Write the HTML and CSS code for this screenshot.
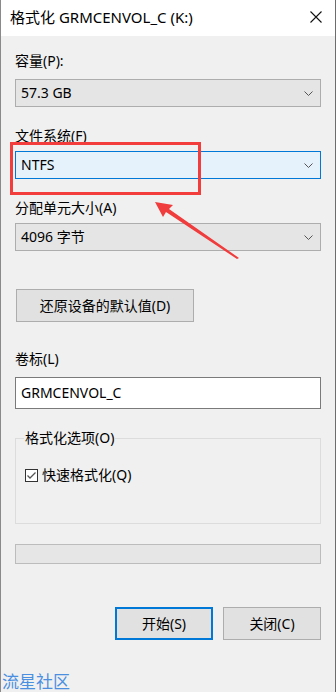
FILE: index.html
```html
<!DOCTYPE html>
<html lang="zh-CN">
<head>
<meta charset="utf-8">
<title>格式化</title>
<link rel="stylesheet" href="styles.css">
</head>
<body>
<div class="window">
  <header class="titlebar">
    <span class="title">格式化 GRMCENVOL_C (K:)</span>
    <svg class="close" width="12" height="12" viewBox="0 0 12 12"><path d="M0.5 0.5L11.5 11.5M11.5 0.5L0.5 11.5" stroke="#111" stroke-width="1.1" fill="none"/></svg>
  </header>
  <main class="content">
    <div class="label l1">容量(P):</div>
    <div class="combo">
      <span>57.3 GB</span>
      <svg class="chev" width="9" height="5" viewBox="0 0 9 5"><path d="M0.5 0.5L4.5 4.5L8.5 0.5" stroke="#555" stroke-width="1" fill="none"/></svg>
    </div>

    <div class="label l2">文件系统(F)</div>
    <div class="combo focused">
      <span>NTFS</span>
      <svg class="chev" width="9" height="5" viewBox="0 0 9 5"><path d="M0.5 0.5L4.5 4.5L8.5 0.5" stroke="#555" stroke-width="1" fill="none"/></svg>
    </div>

    <div class="label l3">分配单元大小(A)</div>
    <div class="combo">
      <span>4096 字节</span>
      <svg class="chev" width="9" height="5" viewBox="0 0 9 5"><path d="M0.5 0.5L4.5 4.5L8.5 0.5" stroke="#555" stroke-width="1" fill="none"/></svg>
    </div>

    <div class="btn restore">还原设备的默认值(D)</div>

    <div class="label l4">卷标(L)</div>
    <div class="textbox">GRMCENVOL_C</div>

    <fieldset class="group">
      <legend>格式化选项(O)</legend>
      <div class="check">
        <svg class="box" width="13" height="13" viewBox="0 0 13 13"><rect x="0.5" y="0.5" width="12" height="12" fill="#fff" stroke="#333"/><path d="M2.5 6.5L5 9L10.5 3.5" stroke="#555" stroke-width="1.3" fill="none"/></svg>
        <span>快速格式化(Q)</span>
      </div>
    </fieldset>

    <div class="progress"></div>

    <div class="actions">
      <div class="btn primary">开始(S)</div>
      <div class="btn">关闭(C)</div>
    </div>
  </main>
  <div class="watermark">流星社区</div>

  <div class="highlight"></div>
  <svg class="arrow" width="336" height="692" viewBox="0 0 336 692">
    <polygon points="155,202 173,205 169,209 239,258 237,259 166,212 163,217" fill="#f03c3c"/>
  </svg>
</div>
</body>
</html>
```
FILE: styles.css
```css
* { box-sizing: border-box; }
html, body { margin: 0; padding: 0; }
body {
  width: 336px;
  height: 692px;
  overflow: hidden;
  background: #f0f0f0;
  font-family: "Noto Sans", "Noto Sans CJK SC", sans-serif;
  font-size: 14px;
  color: #000;
}
.window {
  position: relative;
  width: 336px;
  height: 692px;
  background: #f0f0f0;
  border-left: 1px solid #8a8a8a;
  border-right: 1px solid #6d6d6d;
  display: flex;
  flex-direction: column;
}
.titlebar {
  height: 36px;
  background: #fff;
  display: flex;
  align-items: center;
  justify-content: space-between;
  padding: 0 13px 0 9px;
  flex: none;
}
.title {
  font-size: 15px;
  line-height: 20px;
  margin-top: -2px;
}
.close { margin-top: -3px; }
.content {
  padding: 16px 14px 0 14px;
  display: flex;
  flex-direction: column;
  flex: 1;
}
.label {
  line-height: 18px;
  height: 18px;
}
.combo {
  margin-top: 9px;
  height: 28px;
  background: #e5e5e5;
  border: 1px solid #adadad;
  display: flex;
  align-items: center;
  justify-content: space-between;
  padding: 0 7px 0 5px;
  line-height: 18px;
}
.combo span { margin-top: -1px; }
.combo.focused {
  background: #e5f1fb;
  border-color: #0078d7;
}
.l2 { margin-top: 20px; }
.l2 + .combo { margin-top: 6px; }
.l3 { margin-top: 20px; }
.l3 + .combo { margin-top: 6px; }
.btn {
  height: 33px;
  background: #e1e1e1;
  border: 1px solid #adadad;
  display: flex;
  align-items: center;
  justify-content: center;
  line-height: 18px;
}
.restore {
  margin-top: 38px;
  width: 178px;
  margin-left: 1px;
}
.l4 { margin-top: 28px; }
.textbox {
  margin-top: 9px;
  height: 32px;
  background: #fff;
  border: 1px solid #7a7a7a;
  padding: 0 5px;
  display: flex;
  align-items: center;
  line-height: 18px;
}
.group {
  margin: 20px 0 0 0;
  padding: 19px 9px 0 9px;
  height: 95px;
  border: 1px solid #dcdcdc;
  min-width: 0;
}
.group legend {
  padding: 0 1px;
  margin-left: -1px;
  line-height: 18px;
}
.check {
  display: flex;
  align-items: center;
  gap: 4px;
  line-height: 18px;
}
.progress {
  margin-top: 20px;
  height: 20px;
  background: #e6e6e6;
  border: 1px solid #bcbcbc;
}
.actions {
  margin-top: 43px;
  display: flex;
  justify-content: flex-end;
  gap: 10px;
}
.actions .btn { width: 98px; }
.btn.primary {
  border: 2px solid #0078d7;
}
.watermark {
  position: absolute;
  left: 1px;
  bottom: 0;
  font-size: 17px;
  line-height: 20px;
  color: #4a8fe0;
}
.highlight {
  position: absolute;
  left: 9px;
  top: 142px;
  width: 191px;
  height: 53px;
  border: 3px solid #f33c3c;
}
.arrow {
  position: absolute;
  left: -1px;
  top: 0;
  pointer-events: none;
}
```
